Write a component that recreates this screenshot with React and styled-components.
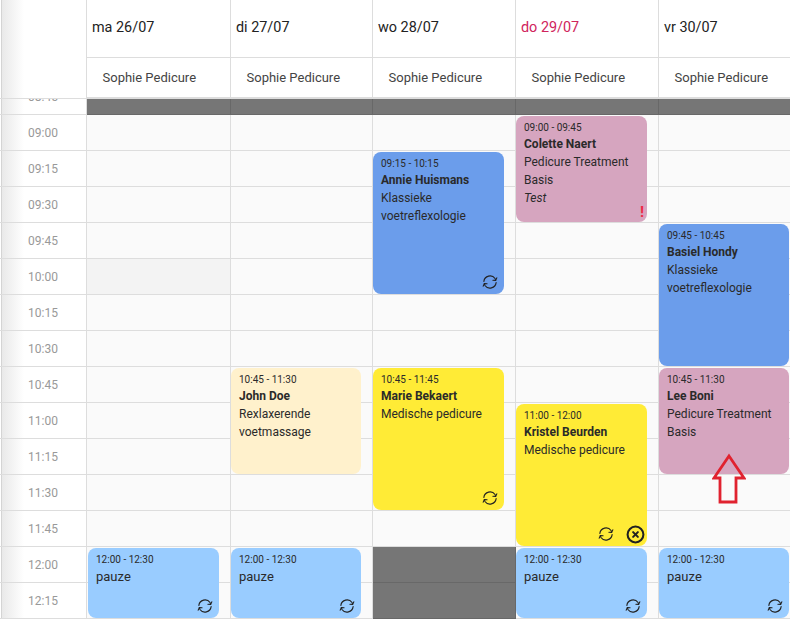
import React from "react"
import styled, { createGlobalStyle, css } from "styled-components"
import { CircleX } from "lucide-react"

const TIMES = ["08:45", "09:00", "09:15", "09:30", "09:45", "10:00", "10:15", "10:30", "10:45", "11:00", "11:15", "11:30", "11:45", "12:00", "12:15"]

const ROW = 36

const COLORS = {
  pink: "#d6a5bf",
  blue: "#6b9deb",
  yellow: "#ffeb36",
  cream: "#fff1cc",
  sky: "#99ccff",
}

const DAYS = [
  {
    label: "ma 26/07",
    muted: [5],
    events: [
      { row: 13, span: 2, color: "sky", time: "12:00 - 12:30", note: "pauze", sync: true },
    ],
  },
  {
    label: "di 27/07",
    events: [
      { row: 8, span: 3, color: "cream", time: "10:45 - 11:30", name: "John Doe", lines: ["Rexlaxerende", "voetmassage"] },
      { row: 13, span: 2, color: "sky", time: "12:00 - 12:30", note: "pauze", sync: true },
    ],
  },
  {
    label: "wo 28/07",
    closed: [13, 14],
    events: [
      { row: 2, span: 4, color: "blue", time: "09:15 - 10:15", name: "Annie Huismans", lines: ["Klassieke", "voetreflexologie"], sync: true },
      { row: 8, span: 4, color: "yellow", time: "10:45 - 11:45", name: "Marie Bekaert", lines: ["Medische pedicure"], sync: true },
    ],
  },
  {
    label: "do 29/07",
    today: true,
    events: [
      { row: 1, span: 3, color: "pink", time: "09:00 - 09:45", name: "Colette Naert", lines: ["Pedicure Treatment", "Basis"], remark: "Test", alert: true },
      { row: 9, span: 4, color: "yellow", time: "11:00 - 12:00", name: "Kristel Beurden", lines: ["Medische pedicure"], sync: true, cancel: true },
      { row: 13, span: 2, color: "sky", time: "12:00 - 12:30", note: "pauze", sync: true },
    ],
  },
  {
    label: "vr 30/07",
    events: [
      { row: 4, span: 4, color: "blue", time: "09:45 - 10:45", name: "Basiel Hondy", lines: ["Klassieke", "voetreflexologie"] },
      { row: 8, span: 3, color: "pink", time: "10:45 - 11:30", name: "Lee Boni", lines: ["Pedicure Treatment", "Basis"] },
      { row: 13, span: 2, color: "sky", time: "12:00 - 12:30", note: "pauze", sync: true },
    ],
  },
]

// two arcs chasing each other, the second half is the first one turned 180deg
const SyncIcon = () => (
  <svg width="16" height="16" viewBox="0 0 24 24" fill="none" stroke="currentColor" strokeWidth="1.7" strokeLinecap="round" strokeLinejoin="round">
    <g>
      <path d="M2.8 11 A9.3 9.3 0 0 1 19.6 6.8 L20.4 9.6" />
      <path d="M16.4 9.4 L20.4 9.8 L22.2 5.8" />
    </g>
    <g transform="rotate(180 12 12)">
      <path d="M2.8 11 A9.3 9.3 0 0 1 19.6 6.8 L20.4 9.6" />
      <path d="M16.4 9.4 L20.4 9.8 L22.2 5.8" />
    </g>
  </svg>
)

const App = () => (
  <Page>
    <GlobalStyle />
    <HeaderGrid>
      <GutterHead />
      {DAYS.map((day) => (
        <HeadColumn key={day.label}>
          <DayTitle $today={day.today}>{day.label}</DayTitle>
          <Employee>Sophie Pedicure</Employee>
        </HeadColumn>
      ))}
    </HeaderGrid>
    <Body>
      <Track>
        <Gutter>
          {TIMES.map((time) => (
            <TimeCell key={time}>{time}</TimeCell>
          ))}
        </Gutter>
        {DAYS.map((day, index) => (
          <DayColumn key={day.label}>
            {TIMES.map((time, row) => (
              <Slot
                key={time}
                $closed={row === 0 || (day.closed || []).includes(row)}
                $muted={(day.muted || []).includes(row)}
              />
            ))}
            <EventLayer $first={index === 0}>
              {day.events.map((event) => (
                <Event key={event.time} $row={event.row} $span={event.span} $color={COLORS[event.color]}>
                  <EventTime>{event.time}</EventTime>
                  {event.name && <EventName>{event.name}</EventName>}
                  {event.note && <EventNote>{event.note}</EventNote>}
                  {(event.lines || []).map((line) => (
                    <EventLine key={line}>{line}</EventLine>
                  ))}
                  {event.remark && <EventRemark>{event.remark}</EventRemark>}
                  {event.alert && <Alert>!</Alert>}
                  {event.sync && (
                    <EventIcons>
                      <SyncIcon />
                      {event.cancel && <CancelIcon size={19} strokeWidth={2.6} />}
                    </EventIcons>
                  )}
                </Event>
              ))}
            </EventLayer>
          </DayColumn>
        ))}
      </Track>
    </Body>
    <Arrow width="34" height="52" viewBox="0 0 34 52">
      <path d="M17 3 L32 25 H24 V49 H8 V25 H2 Z" fill="none" stroke="#e0222f" strokeWidth="2.8" />
    </Arrow>
  </Page>
)

const GlobalStyle = createGlobalStyle`
  html, body {
    margin: 0;
    padding: 0;
    height: 100%;
    overflow: hidden;
    background: #fff;
    font-family: Roboto, "Liberation Sans", sans-serif;
  }
`

const columns = css`
  display: grid;
  grid-template-columns: 87px 144px 142px 143px 143px 142px;
`

const gutterShade = css`
  background: linear-gradient(90deg, #fff 0, #fff 1px, #d4d4d4 1px, #d4d4d4 2px, #e9e9e9 2px, #fff 24px);
  border-right: 1px solid #ddd;
  box-sizing: border-box;
`

const Page = styled.div`
  position: relative;
  width: 790px;
  height: 619px;
  overflow: hidden;
  display: flex;
  flex-direction: column;
`

const HeaderGrid = styled.header`
  ${columns}
  flex: none;
  height: 99px;
`

const GutterHead = styled.div`
  ${gutterShade}
  border-bottom: 1px solid #ddd;
`

const HeadColumn = styled.div`
  display: grid;
  grid-template-rows: 58px 41px;
  border-right: 1px solid #ddd;
`

const DayTitle = styled.div`
  display: flex;
  align-items: center;
  padding: 0 0 3px 5px;
  box-sizing: border-box;
  border-bottom: 1px solid #ddd;
  font-size: 14.4px;
  color: ${(p) => (p.$today ? "#d0245c" : "#222")};
`

const Employee = styled.div`
  display: flex;
  align-items: center;
  padding: 0 0 0 15.5px;
  box-sizing: border-box;
  border-bottom: 2px solid #ddd;
  font-size: 13px;
  color: #444;
`

const Body = styled.main`
  flex: 1;
  min-height: 0;
  overflow: hidden;
`

const Track = styled.div`
  ${columns}
  margin-top: -20px;
`

const Gutter = styled.div`
  ${gutterShade}
`

const TimeCell = styled.div`
  height: ${ROW}px;
  box-sizing: border-box;
  border-bottom: 1px solid #ddd;
  display: flex;
  align-items: center;
  justify-content: center;
  font-size: 12px;
  color: #999;
`

const DayColumn = styled.section`
  position: relative;
  border-right: 1px solid #ddd;
  background: #fafafa;
`

const Slot = styled.div`
  position: relative;
  height: ${ROW}px;
  box-sizing: border-box;
  border-bottom: 1px solid #ddd;
  background: ${(p) => (p.$muted ? "#f3f3f3" : "transparent")};

  ${(p) =>
    p.$closed &&
    css`
      &::after {
        content: "";
        position: absolute;
        inset: 0 -1px -1px 0;
        background: rgba(0, 0, 0, 0.53);
      }
    `}
`

const EventLayer = styled.div`
  position: absolute;
  top: 0;
  bottom: 0;
  left: ${(p) => (p.$first ? 1 : 0)}px;
  right: 11px;
`

const Event = styled.article`
  position: absolute;
  left: 0;
  right: 0;
  top: ${(p) => p.$row * ROW + 1}px;
  height: ${(p) => p.$span * ROW - 2}px;
  box-sizing: border-box;
  padding: 4px 8px 0 8px;
  border-radius: 8px;
  background: ${(p) => p.$color};
  color: #2a2a2a;
  font-size: 12px;
  line-height: 18px;
`

const EventTime = styled.div`
  font-size: 10px;
  line-height: 15px;
`

const EventName = styled.div`
  font-weight: 700;
`

const EventNote = styled.div`
  margin-top: 1px;
  font-size: 13px;
`

const EventLine = styled.div``

const EventRemark = styled.div`
  font-style: italic;
`

const Alert = styled.span`
  position: absolute;
  right: 3px;
  bottom: 2px;
  color: #ee2a44;
  font-size: 15px;
  font-weight: 700;
  line-height: 16px;
`

const EventIcons = styled.div`
  position: absolute;
  right: 6px;
  bottom: 4px;
  display: flex;
  align-items: center;
  gap: 12px;
  height: 16px;
  color: #212121;

  svg {
    display: block;
  }
`

const CancelIcon = styled(CircleX)`
  margin-right: -3.5px;
`

const Arrow = styled.svg`
  position: absolute;
  left: 712px;
  top: 453px;
`

export default App
